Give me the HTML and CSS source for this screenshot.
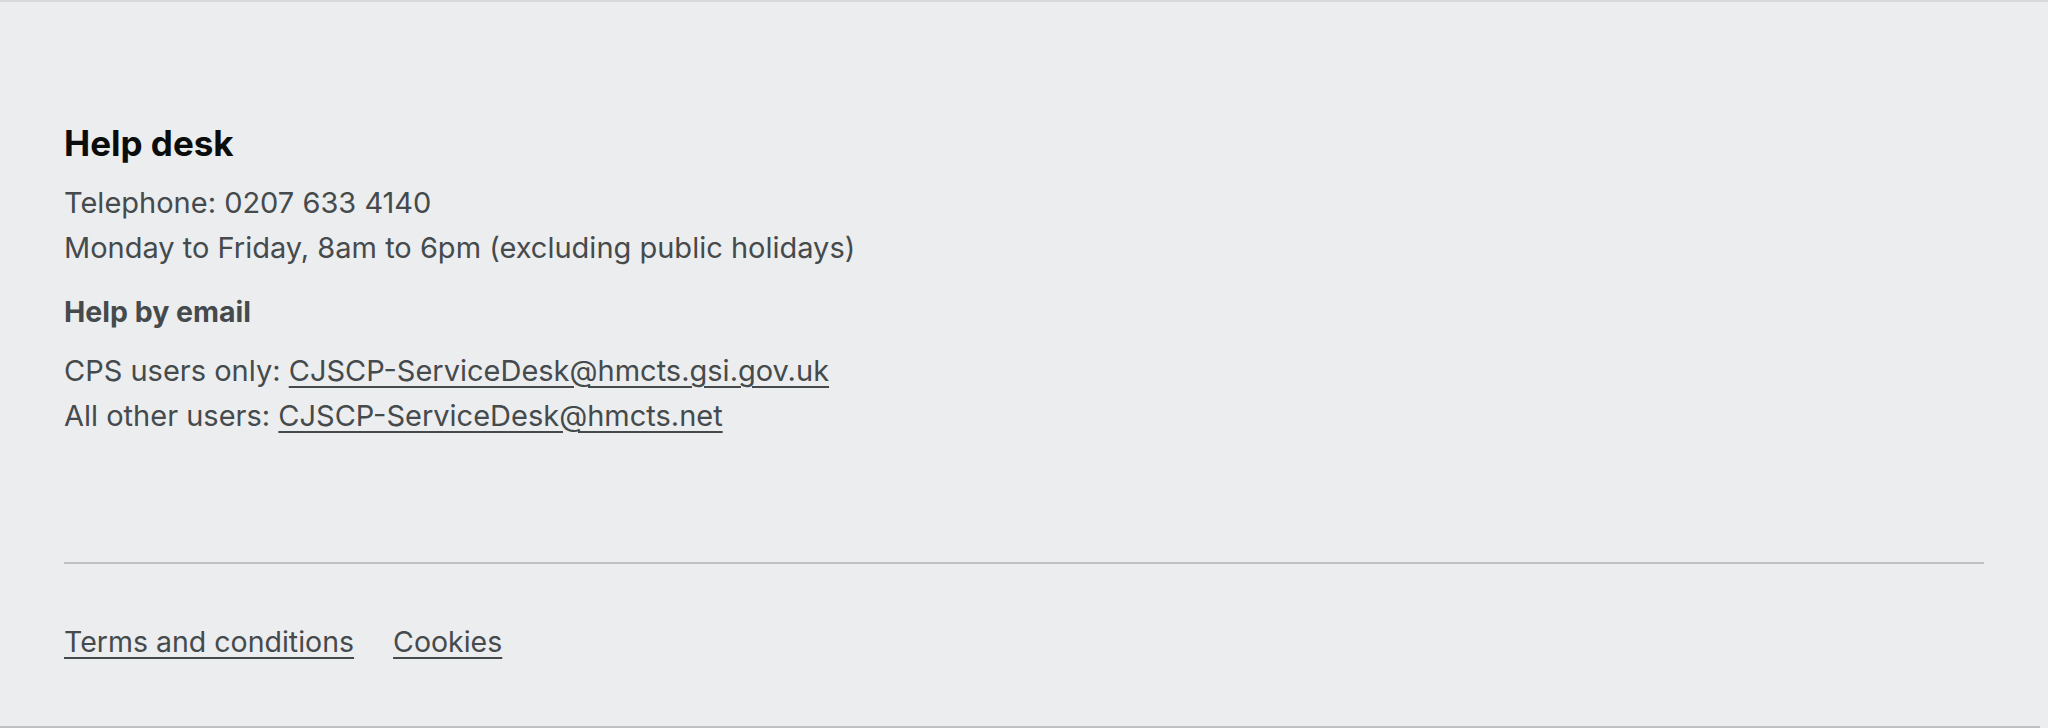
FILE: index.html
```html
<!DOCTYPE html>
<html lang="en">
<head>
<meta charset="utf-8">
<title>Help desk</title>
<link rel="stylesheet" href="styles.css">
</head>
<body>
<footer class="footer">
  <div class="footer-inner">
    <section class="help">
      <h2 class="help-title">Help desk</h2>
      <p class="body-text">Telephone: 0207 633 4140<br>Monday to Friday, 8am to 6pm (excluding public holidays)</p>
      <h3 class="help-subtitle">Help by email</h3>
      <p class="body-text email-lines">CPS users only: <a class="link" href="#">CJSCP-ServiceDesk@hmcts.gsi.gov.uk</a><br>All other users: <a class="link" href="#">CJSCP-ServiceDesk@hmcts.net</a></p>
    </section>
    <hr class="section-break">
    <ul class="footer-links">
      <li><a class="link" href="#">Terms and conditions</a></li>
      <li><a class="link" href="#">Cookies</a></li>
    </ul>
  </div>
</footer>
</body>
</html>
```
FILE: styles.css
```css
html, body {
  margin: 0;
  padding: 0;
  background: #ecedef;
}

body {
  font-family: Inter, "Liberation Sans", Arial, sans-serif;
  color: #454a4c;
}

.footer {
  border-top: 2px solid #d6d8da;
}

.footer-inner {
  margin-right: 8px;
  padding: 121px 56px 0 64px;
  border-bottom: 2px solid #bfc1c3;
  height: 603px;
}

.help-title {
  margin: 0;
  font-size: 35px;
  line-height: 40px;
  font-weight: 700;
  color: #0b0c0c;
}

.body-text {
  margin: 17px 0 0;
  font-size: 29px;
  line-height: 45px;
  font-weight: 400;
}

.help-subtitle {
  margin: 19px 0 0;
  font-size: 28.5px;
  line-height: 45px;
  font-weight: 700;
  color: #454a4c;
}

.email-lines {
  margin-top: 14px;
}

.link {
  color: #454a4c;
  text-decoration: underline;
  text-decoration-thickness: 2px;
  text-underline-offset: 5px;
}

.section-break {
  margin: 124px 0 0;
  border: 0;
  height: 2px;
  background: #bfc1c3;
}

.footer-links {
  list-style: none;
  margin: 55px 0 0;
  padding: 0;
  display: flex;
  gap: 39px;
  font-size: 28.5px;
  line-height: 45px;
}
```
